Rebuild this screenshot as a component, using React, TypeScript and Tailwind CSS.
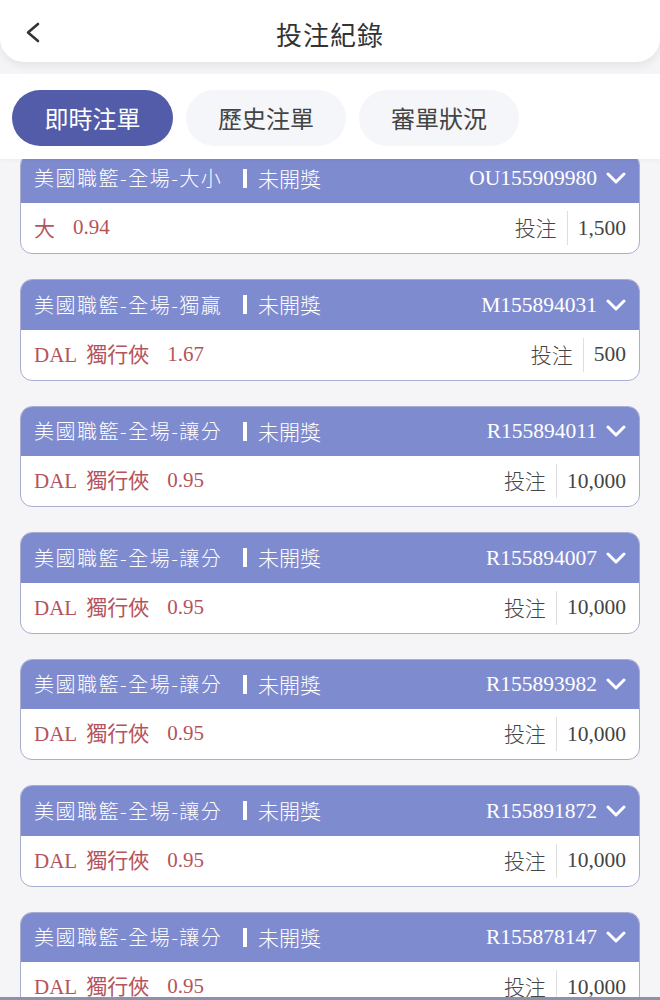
import React from 'react';

const sans = { fontFamily: '"Noto Sans CJK TC", "Noto Sans", sans-serif' };
const serif = { fontFamily: '"Liberation Serif", "Noto Sans CJK TC", serif' };

type Bet = {
  title: string;
  id: string;
  pick: string;
  odds: string;
  amount: string;
};

const bets: Bet[] = [
  { title: '美國職籃-全場-大小', id: 'OU155909980', pick: '大', odds: '0.94', amount: '1,500' },
  { title: '美國職籃-全場-獨贏', id: 'M155894031', pick: 'DAL 獨行俠', odds: '1.67', amount: '500' },
  { title: '美國職籃-全場-讓分', id: 'R155894011', pick: 'DAL 獨行俠', odds: '0.95', amount: '10,000' },
  { title: '美國職籃-全場-讓分', id: 'R155894007', pick: 'DAL 獨行俠', odds: '0.95', amount: '10,000' },
  { title: '美國職籃-全場-讓分', id: 'R155893982', pick: 'DAL 獨行俠', odds: '0.95', amount: '10,000' },
  { title: '美國職籃-全場-讓分', id: 'R155891872', pick: 'DAL 獨行俠', odds: '0.95', amount: '10,000' },
  { title: '美國職籃-全場-讓分', id: 'R155878147', pick: 'DAL 獨行俠', odds: '0.95', amount: '10,000' },
];

function Pick({ text }: { text: string }) {
  // team code in serif, chinese name in sans
  const parts = text.split(' ');
  if (parts.length === 1) return <span style={sans}>{text}</span>;
  return (
    <span>
      <span style={serif}>{parts[0]}</span>
      <span style={sans} className="ml-[9px]">{parts[1]}</span>
    </span>
  );
}

function BetCard({ bet }: { bet: Bet }) {
  return (
    <div className="rounded-[12px] border-[1.5px] border-[#a9adcf] bg-white overflow-hidden">
      <div className="h-[49.5px] bg-[#7f8bcf] flex items-center pl-[13px] pr-[13px] text-white">
        <span style={sans} className="text-[20px] tracking-[1.5px] w-[209px] whitespace-nowrap font-light">
          {bet.title}
        </span>
        <span className="w-[4px] h-[19px] bg-white mr-[11px]" />
        <span style={sans} className="text-[21px] font-light">未開獎</span>
        <span style={serif} className="ml-auto text-[21.5px]">{bet.id}</span>
        <svg width="20" height="14" viewBox="0 0 20 14" className="ml-[9px]">
          <polyline points="2,3 10,11 18,3" fill="none" stroke="white" strokeWidth="3" strokeLinecap="round" strokeLinejoin="round" />
        </svg>
      </div>
      <div className="h-[50px] flex items-center pl-[13px] pr-[13px] text-[21px]">
        <span className="text-[#b5535c] flex items-center">
          <Pick text={bet.pick} />
          <span style={serif} className="ml-[18px]">{bet.odds}</span>
        </span>
        <span style={sans} className="ml-auto text-[#444] text-[21px] font-light">投注</span>
        <span className="w-[1px] h-[34px] bg-[#dedede] mx-[10px]" />
        <span style={serif} className="text-[#444] text-[21.5px]">{bet.amount}</span>
      </div>
    </div>
  );
}

export default function App() {
  const tabs = ['即時注單', '歷史注單', '審單狀況'];
  return (
    <div className="w-[660px] h-[1000px] overflow-hidden bg-[#f5f5f7] flex flex-col relative">
      {/* Header */}
      <div className="h-[62px] bg-white rounded-b-[24px] shadow-[0_4px_10px_rgba(0,0,0,0.07)] flex items-center justify-center relative z-20">
        <svg width="18" height="24" viewBox="0 0 18 24" className="absolute left-[24px] top-[21px]">
          <polyline points="14,3 4,11.5 14,20" fill="none" stroke="#333" strokeWidth="2.6" strokeLinecap="round" strokeLinejoin="round" />
        </svg>
        <span style={sans} className="text-[26px] text-[#333] tracking-[1px] mt-[4px]">投注紀錄</span>
      </div>

      {/* Tabs */}
      <div className="mt-[12px] h-[85px] bg-white flex items-center gap-[13px] px-[12px] pt-[2px] relative z-10 shadow-[0_2px_4px_rgba(0,0,0,0.03)]">
        {tabs.map((t, i) => (
          <div
            key={t}
            style={sans}
            className={
              i === 0
                ? 'w-[161px] h-[56px] rounded-full bg-[#525ca9] text-white text-[24px] flex items-center justify-center'
                : 'w-[160px] h-[56px] rounded-full bg-[#f5f6fa] text-[#444] text-[24px] flex items-center justify-center'
            }
          >
            {t}
          </div>
        ))}
      </div>

      {/* List */}
      <div className="flex-1 overflow-hidden">
        <div className="mt-[-6.5px] px-[20px] flex flex-col gap-[25px]">
          {bets.map((b) => (
            <BetCard key={b.id} bet={b} />
          ))}
        </div>
      </div>
      <div className="h-[3px] bg-[#8d92aa]" />
    </div>
  );
}
